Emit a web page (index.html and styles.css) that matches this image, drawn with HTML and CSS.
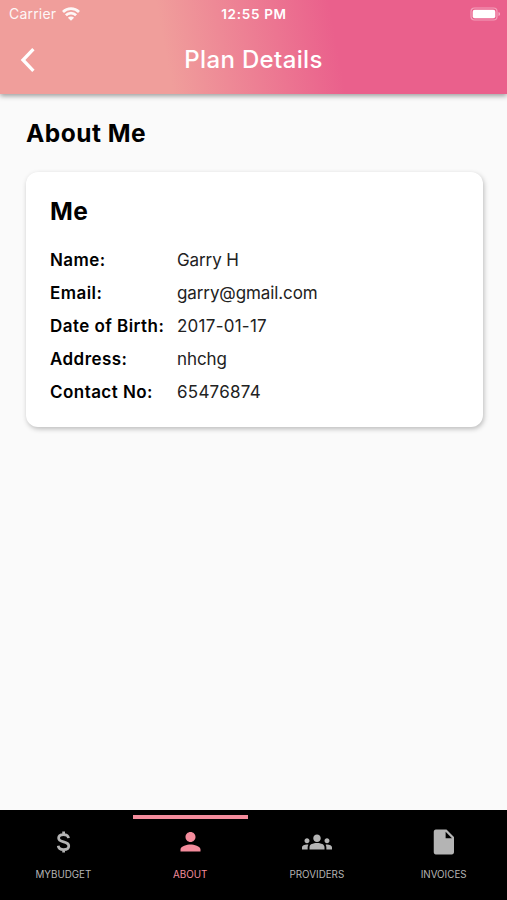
FILE: index.html
```html
<!DOCTYPE html>
<html lang="en">

<head>
  <meta charset="utf-8">
  <meta name="viewport" content="width=device-width">
  <title>Plan Details</title>
  <link rel="stylesheet" href="styles.css">
</head>

<body>
  <header class="header">
    <div class="status">
      <div class="carrier">
        <span>Carrier</span>
        <svg class="wifi" viewBox="0 0 18 14" width="18" height="14">
          <path d="M1 5a11.3 11.3 0 0 1 16 0M3.9 8.2a7.2 7.2 0 0 1 10.2 0" fill="none" stroke="currentColor" stroke-width="2.7" />
          <path d="M9 13.8L5.9 10.7a4.4 4.4 0 0 1 6.2 0z" fill="currentColor" />
        </svg>
      </div>
      <span class="time">12:55 PM</span>
      <svg class="battery" viewBox="0 0 31 14" width="31" height="14">
        <rect x="1" y="1" width="26" height="12" rx="3.5" fill="none" stroke="#fff" stroke-opacity=".4" stroke-width="1.2" />
        <rect x="2.7" y="2.7" width="22.6" height="8.6" rx="2" fill="#fff" />
        <path d="M28.5 5v4q1.6-.6 1.6-2t-1.6-2z" fill="#fff" fill-opacity=".5" />
      </svg>
    </div>
    <div class="toolbar">
      <a class="back" href="#" aria-label="Back">
        <svg viewBox="0 0 16 24" width="16" height="24">
          <path d="M14.4 1.2L4 12l10.4 10.8" fill="none" stroke="currentColor" stroke-width="3.3" />
        </svg>
      </a>
      <h1 class="title">Plan Details</h1>
    </div>
  </header>

  <main class="content">
    <h2 class="heading">About Me</h2>
    <section class="card">
      <h3 class="heading">Me</h3>
      <dl class="details">
        <dt>Name:</dt>
        <dd>Garry H</dd>
        <dt>Email:</dt>
        <dd>garry@gmail.com</dd>
        <dt>Date of Birth:</dt>
        <dd class="number">2017-01-17</dd>
        <dt>Address:</dt>
        <dd>nhchg</dd>
        <dt>Contact No:</dt>
        <dd class="number">65476874</dd>
      </dl>
    </section>
  </main>

  <nav class="tabs">
    <a class="tab" href="#">
      <svg viewBox="0 0 24 24" width="30" height="30">
        <path class="line" d="M16.4 8.9C16.2 7.1 14.7 6 12.4 6 10 6 8.5 7.1 8.5 8.8c0 1.8 1.5 2.5 4 3.1 2.6.6 4.1 1.4 4.1 3.3 0 1.8-1.7 2.9-4.1 2.9-2.5 0-4.1-1.2-4.3-3.1M12.5 6V3.6M12.5 18v2.4" />
      </svg>
      <span>MYBUDGET</span>
    </a>
    <a class="tab active" href="#">
      <svg viewBox="0 0 24 24" width="30" height="30">
        <path d="M12.4 12c2.21 0 4-1.79 4-4s-1.79-4-4-4-4 1.79-4 4 1.79 4 4 4zm0 2c-2.67 0-8 1.34-8 4v1.6h16V18c0-2.66-5.33-4-8-4z" />
      </svg>
      <span>ABOUT</span>
    </a>
    <a class="tab" href="#">
      <svg viewBox="0 0 24 24" width="30" height="30">
        <path d="M12 12.75c1.63 0 3.07.39 4.24.9 1.08.48 1.76 1.56 1.76 2.73V18H6v-1.61c0-1.18.68-2.26 1.76-2.73 1.17-.52 2.61-.91 4.24-.91zM4 13c1.1 0 2-.9 2-2s-.9-2-2-2-2 .9-2 2 .9 2 2 2zm1.13 1.1C4.76 14.04 4.39 14 4 14c-.99 0-1.93.21-2.78.58C.48 14.9 0 15.62 0 16.43V18h4.5v-1.61c0-.83.23-1.61.63-2.29zM20 13c1.1 0 2-.9 2-2s-.9-2-2-2-2 .9-2 2 .9 2 2 2zm4 3.43c0-.81-.48-1.53-1.22-1.85-.85-.37-1.79-.58-2.78-.58-.39 0-.76.04-1.13.1.4.68.63 1.46.63 2.29V18H24v-1.57zM12 6c1.66 0 3 1.34 3 3s-1.34 3-3 3-3-1.34-3-3 1.34-3 3-3z" />
      </svg>
      <span>PROVIDERS</span>
    </a>
    <a class="tab" href="#">
      <svg viewBox="0 0 24 24" width="30" height="30">
        <path fill-rule="evenodd" d="M5.5 2H14l6 6v12c0 1.1-.7 2-1.8 2H5.5c-1.1 0-1.7-.9-1.7-2V4c0-1.1.6-2 1.7-2zm7.8 1.8v5.1h5.1z" />
      </svg>
      <span>INVOICES</span>
    </a>
  </nav>
</body>

</html>
```

FILE: styles.css
```css
* {
  box-sizing: border-box;
}

body {
  margin: 0;
  min-height: 100vh;
  display: flex;
  flex-direction: column;
  background: #fafafa;
  color: #000;
  font-family: Inter, "Liberation Sans", sans-serif;
}

h1,
h2,
h3,
dl,
dd {
  margin: 0;
}

.header {
  height: 94px;
  color: #fff;
  background: linear-gradient(79.5deg, #f09e9b 33%, #ea608c 66%);
  box-shadow: 0 2px 5px rgba(0, 0, 0, .38);
}

.status {
  display: grid;
  grid-template-columns: 1fr auto 1fr;
  align-items: center;
  height: 27px;
  padding: 0 6px 0 9px;
  font-size: 14px;
}

.carrier {
  display: flex;
  align-items: center;
  gap: 6px;
  letter-spacing: .2px;
  opacity: .92;
}

.time {
  margin-left: -2px;
  font-size: 13.5px;
  font-weight: 600;
  letter-spacing: .7px;
}

.battery {
  justify-self: end;
}

.toolbar {
  display: grid;
  grid-template-columns: 1fr auto 1fr;
  align-items: center;
  height: 65px;
  padding: 0 19px;
}

.back {
  height: 24px;
  color: inherit;
}

.title {
  font-size: 24px;
  font-weight: 500;
  letter-spacing: .35px;
}

.content {
  flex: 1;
  padding: 24px 24px 0 26px;
}

.heading {
  font-size: 24.5px;
  font-weight: 700;
  letter-spacing: .5px;
  line-height: 30px;
}

.card {
  margin-top: 24px;
  height: 255px;
  padding: 24px;
  border-radius: 12px;
  background: #fff;
  box-shadow: 1px 2px 5px rgba(0, 0, 0, .25);
}

.details {
  display: grid;
  grid-template-columns: 127px 1fr;
  grid-auto-rows: 33px;
  align-items: center;
  margin-top: 17px;
  font-size: 17px;
}

.details dt {
  font-weight: 600;
  letter-spacing: .45px;
  white-space: nowrap;
}

.details dd {
  color: #222;
  letter-spacing: -.1px;
}

.details .number {
  letter-spacing: .25px;
}

.tabs {
  display: grid;
  grid-template-columns: repeat(4, 1fr);
  height: 90px;
  padding-top: 5px;
  background: #000;
}

.tab {
  display: flex;
  flex-direction: column;
  align-items: center;
  gap: 12px;
  margin: 0 6px;
  padding-top: 8px;
  border-top: 4px solid transparent;
  color: #b4b4b4;
  font-size: 9.8px;
  text-decoration: none;
}

.tab svg {
  fill: currentColor;
}

.tab .line {
  fill: none;
  stroke: currentColor;
  stroke-width: 2.2;
}

.tab.active {
  border-color: #f48c9c;
  color: #f48c9c;
}
```
